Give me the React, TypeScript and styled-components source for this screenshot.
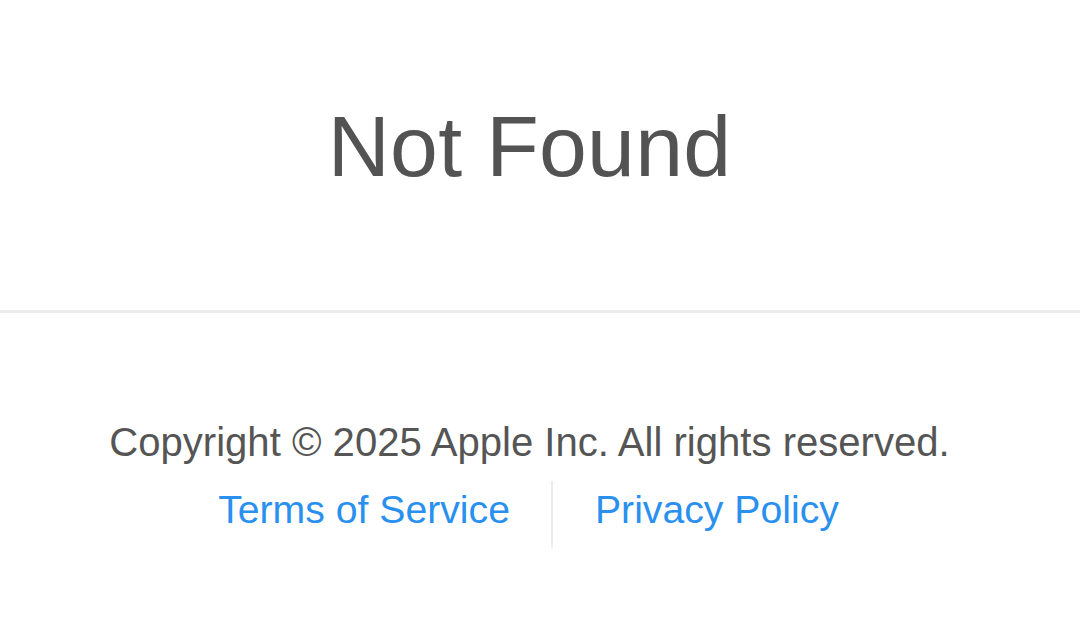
import React from "react"
import styled, { createGlobalStyle } from "styled-components"

const GlobalStyle = createGlobalStyle`
  html, body {
    margin: 0;
    padding: 0;
    background: #ffffff;
    font-family: "Liberation Sans", Arial, sans-serif;
  }
`

const App: React.FC = () => {
  return (
    <Page>
      <GlobalStyle />
      <Header>
        <Title>Not Found</Title>
      </Header>
      <Footer>
        <Copyright>Copyright © 2025 Apple Inc. All rights reserved.</Copyright>
        <LinkRow>
          <FooterLink href="#" side="left">Terms of Service</FooterLink>
          <Divider />
          <FooterLink href="#" side="right">Privacy Policy</FooterLink>
        </LinkRow>
      </Footer>
    </Page>
  )
}

const Page = styled.div`
  width: 1080px;
  min-height: 640px;
  display: flex;
  flex-direction: column;
`

const Header = styled.header`
  height: 313px;
  box-sizing: border-box;
  padding: 103px 21px 0 0;
  border-bottom: 3px solid #ececec;
  display: flex;
  justify-content: center;
`

const Title = styled.h1`
  margin: 0;
  font-size: 86px;
  line-height: 86px;
  font-weight: 400;
  color: #535353;
  letter-spacing: 0.2px;
`

const Footer = styled.footer`
  padding: 109px 21px 0 0;
  display: flex;
  flex-direction: column;
  align-items: center;
`

const Copyright = styled.p`
  margin: 0;
  font-size: 40.1px;
  line-height: 40px;
  color: #555555;
`

const LinkRow = styled.nav`
  margin-top: 19px;
  display: flex;
  align-items: flex-start;
  margin-left: -2px;
`

const FooterLink = styled.a<{ side: "left" | "right" }>`
  margin-top: 9px;
  font-size: 39.2px;
  line-height: 39px;
  color: #2a90f0;
  text-decoration: none;
  ${p => (p.side === "left" ? "margin-right: 41px;" : "margin-left: 42px;")}
`

const Divider = styled.span`
  width: 2px;
  height: 67px;
  background: #ececec;
`

export default App
